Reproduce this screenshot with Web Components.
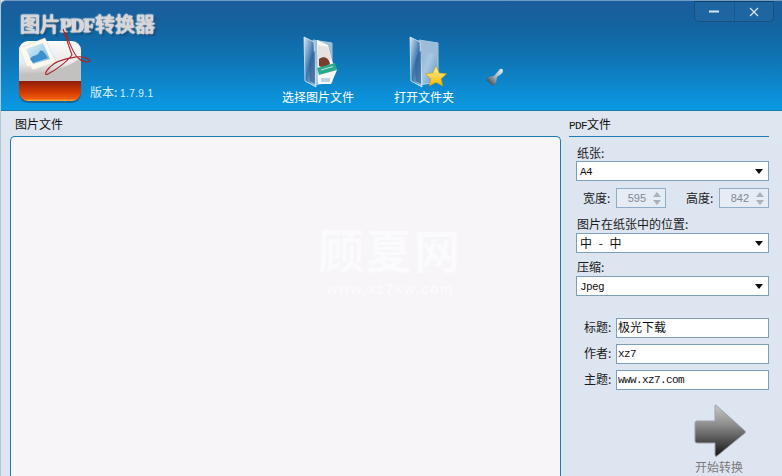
<!DOCTYPE html>
<html lang="zh">
<head>
<meta charset="utf-8">
<title>图片PDF转换器</title>
<style>
  html, body { margin: 0; height: 100%; overflow: hidden; background: #dce5f0; }
  body { font: 12px "Noto Sans CJK SC", sans-serif; color: #1a1a1a; }
</style>
</head>
<body>
<pdf-app></pdf-app>
<script>
const FONT = '"Noto Sans CJK SC", sans-serif';
const MONO = '"Liberation Mono", "Noto Sans CJK SC", monospace';

class AppLogo extends HTMLElement {
  constructor() {
    super();
    this.attachShadow({ mode: 'open' });
    this.shadowRoot.innerHTML = `
      <style>:host { display: block; width: 76px; height: 76px; } svg { display: block; overflow: visible; }</style>
      <svg width="76" height="76" viewBox="18 30 76 76">
        <defs>
          <linearGradient id="top" x1="0" y1="0" x2="0" y2="1">
            <stop offset="0" stop-color="#fbfbfb"/><stop offset=".55" stop-color="#e8e8e8"/><stop offset="1" stop-color="#a9a7a5"/>
          </linearGradient>
          <linearGradient id="red" x1="0" y1="0" x2="0" y2="1">
            <stop offset="0" stop-color="#8f1b04"/><stop offset=".55" stop-color="#d23a04"/><stop offset=".88" stop-color="#ee5a0c"/><stop offset="1" stop-color="#f6ad3c"/>
          </linearGradient>
          <linearGradient id="sky" x1="0" y1="0" x2="1" y2="1">
            <stop offset="0" stop-color="#e2f3fa"/><stop offset="1" stop-color="#6fb6e0"/>
          </linearGradient>
          <clipPath id="round"><rect x="19" y="42" width="62" height="60" rx="9"/></clipPath>
        </defs>
        <rect x="19" y="43" width="62" height="61" rx="9" fill="#1b3f5e" opacity=".55"/>
        <g clip-path="url(#round)">
          <rect x="19" y="42" width="62" height="41" fill="url(#top)"/>
          <path d="M19 76 C40 74 66 72 81 58 V83 H19 Z" fill="#c3c1bf"/>
          <rect x="19" y="82" width="62" height="20" fill="url(#red)"/>
        </g>
        <path d="M19 49 L45 39 L56 63 L33 71 L30 67 L27 68 Z" fill="#fbf8ef" stroke="#d9d4c4" stroke-width=".5"/>
        <path d="M26 50 L43 44 L50 60 L33 65 Z" fill="url(#sky)"/>
        <path d="M30 60 C34 54 37 59 40 52 C43 50 45 55 48 59 L33 64 Z" fill="#3d8fcb"/>
        <path d="M63 30 C66 38 69 48 72 56 C66 64 54 72 48 75 C44 77 45 73 50 68 C56 61 70 59 76 58 C82 57 90 60 90 62 C88 64 82 63 77 58 C72 52 68 40 65 33" fill="none" stroke="#a8262b" stroke-width="1.1"/>
      </svg>`;
  }
}

class FolderIcon extends HTMLElement {
  constructor() {
    super();
    this.attachShadow({ mode: 'open' });
    const kind = this.getAttribute('kind');
    const extra = kind === 'star' ? `
      <path d="M26 29 L29.3 36 L36.6 36.8 L31.2 41.8 L32.7 49 L26 45.3 L19.3 49 L20.8 41.8 L15.4 36.8 L22.7 36 Z" fill="url(#gold)" stroke="#c79a10" stroke-width=".6"/>` : `
      <path d="M13 3 L24 8 L28 24 L33 33 L27 47 L14 47 Z" fill="#f7f7f5"/>
      <path d="M14 8 L24 10 L27 22 L21 27 L14 28 Z" fill="#e6e3df"/>
      <path d="M15 22 C20 18 25 21 26 27 L20 31 L15 29 Z" fill="#7a3f2c"/>
      <path d="M13 31 L31 26 L33 33 L15 38 Z" fill="#2aa98c"/>
      <path d="M17 33 L29 29.5" stroke="#bfe9dd" stroke-width="1"/>
      <rect x="17" y="41" width="9" height="4" fill="#b9d3e3"/>`;
    this.shadowRoot.innerHTML = `
      <style>:host { display: block; width: 34px; height: 51px; } svg { display: block; overflow: visible; }</style>
      <svg width="34" height="51" viewBox="0 0 34 51">
        <defs>
          <linearGradient id="back" x1="0" y1="0" x2="1" y2="1">
            <stop offset="0" stop-color="#7ea9cf"/><stop offset=".5" stop-color="#a9c8e0"/><stop offset="1" stop-color="#5b8dbd"/>
          </linearGradient>
          <linearGradient id="door" x1="0" y1="0" x2="1" y2="1">
            <stop offset="0" stop-color="#d8e8f2"/><stop offset=".5" stop-color="#3c75ad"/><stop offset="1" stop-color="#b3cfe4"/>
          </linearGradient>
          <linearGradient id="gold" x1="0" y1="0" x2="0" y2="1">
            <stop offset="0" stop-color="#fff3a0"/><stop offset="1" stop-color="#f5b800"/>
          </linearGradient>
        </defs>
        <path d="M9 3 L28 6 V45 L9 48 Z" fill="url(#back)" stroke="#c9dff0" stroke-width=".8"/>
        <path d="M9 22 C18 12 27 16 28 24 V6 L9 3 Z" fill="#9dbcd8"/>
        ${extra}
        <path d="M0 0 L10 5 L12 50 L1 44 Z" fill="url(#door)" stroke="#dcecf8" stroke-width=".8"/>
        <path d="M11 14 C5 18 4 30 6 44 L11 47 Z" fill="#2f6299" opacity=".7"/>
      </svg>`;
  }
}

class ToolButton extends HTMLElement {
  constructor() {
    super();
    this.attachShadow({ mode: 'open' });
    this.shadowRoot.innerHTML = `
      <style>
        :host { display: flex; flex-direction: column; align-items: center; color: #fff; font: 12px/16px ${FONT}; }
        .icon { height: 51px; margin: 0 0 1px 6px; }
      </style>
      <div class="icon"><slot name="icon"></slot></div>
      <span><slot></slot></span>`;
  }
}

class WindowControls extends HTMLElement {
  constructor() {
    super();
    this.attachShadow({ mode: 'open' });
    this.shadowRoot.innerHTML = `
      <style>
        :host { display: flex; width: 78px; height: 19px; border: 1px solid #1a4f80; border-top-color: #123f68; border-radius: 0 0 5px 5px; background: #1e66a2; }
        div { flex: 1; display: flex; align-items: center; justify-content: center; }
        div + div { border-left: 1px solid #1a5790; }
        svg { display: block; }
      </style>
      <div title="最小化"><svg width="10" height="3"><rect width="10" height="2" y=".5" fill="#d5e6f3"/></svg></div>
      <div title="关闭"><svg width="10" height="10"><path d="M1 1 L9 9 M9 1 L1 9" stroke="#d5e6f3" stroke-width="1.2"/></svg></div>`;
  }
}

class AppHeader extends HTMLElement {
  constructor() {
    super();
    this.attachShadow({ mode: 'open' });
    this.shadowRoot.innerHTML = `
      <style>
        :host {
          display: flex; box-sizing: border-box; height: 111px; padding-left: 17px;
          background: linear-gradient(#1c5d9c 0, #12649f 25%, #0f76b6 55%, #0a9ae4 100%);
          border-top: 1px solid #6f9dc6; border-bottom: 1px solid #177ca9; border-radius: 5px 0 0 0;
        }
        .brand { width: 264px; flex: none; }
        .title {
          margin-left: 2px; padding-top: 11px; height: 17px; font: 20px/24px ${FONT}; color: #dad8da; white-space: nowrap;
          -webkit-text-stroke: .4px #cfcdcf;
          text-shadow: 0 0 2px #fff, 0 0 2px #fff, 0 0 1px #fff, 2px 2px 2px #12375a;
        }
        .title b { font: bold 19px "Liberation Serif", serif; letter-spacing: -1px; padding-right: 1px; }
        .row { display: flex; align-items: flex-end; }
        .version { margin: 0 0 5px -4px; color: #d9f0fb; font: 12px/16px ${FONT}; white-space: nowrap; }
        .version i { font: normal 10px "Liberation Sans", sans-serif; letter-spacing: .4px; }
        .tools { display: flex; gap: 40px; padding-top: 36px; align-items: flex-start; }
        .lamp { margin: 67px 0 0 32px; }
        .ctl { margin: 0 8px 0 auto; }
      </style>
      <div class="brand">
        <div class="title">图片<b>PDF</b>转换器</div>
        <div class="row">
          <slot name="logo"></slot>
          <div class="version">版本: <i>1.7.9.1</i></div>
        </div>
      </div>
      <div class="tools"><slot name="tools"></slot></div>
      <svg class="lamp" width="18" height="19" viewBox="0 0 18 19">
        <defs><linearGradient id="lamp" x1="1" y1="0" x2="0" y2="1">
          <stop offset="0" stop-color="#eef5f9"/><stop offset=".45" stop-color="#a6b6c2"/><stop offset="1" stop-color="#18222c"/>
        </linearGradient></defs>
        <path d="M14 1 Q17 0 17 3 Q17 5 14 7 L11 9 L10 15 L7 18 L0 12 L2 9 L8 8 Z" fill="url(#lamp)"/>
      </svg>
      <window-controls class="ctl"></window-controls>`;
  }
}

class FilePanel extends HTMLElement {
  constructor() {
    super();
    this.attachShadow({ mode: 'open' });
    this.shadowRoot.innerHTML = `
      <style>
        :host { display: flex; flex-direction: column; position: relative; width: 551px; margin-left: 9px; }
        h2 { margin: 0; height: 25px; padding-left: 5px; font: 12px/25px ${FONT}; color: #111; }
        .box {
          flex: 1; background: #f7f5f8; border: 1px solid #1b7cb2; border-bottom: 0;
          border-radius: 5px 5px 0 0; position: relative;
        }
        .mark { position: absolute; left: 307px; top: 78px; width: 144px; text-align: center; color: #fbfafc; }
        .mark b { display: block; font: bold 46px/66px ${FONT}; letter-spacing: 2px; white-space: nowrap; }
        .mark span { display: block; margin-top: 0; font: bold 14px/16px "Liberation Sans", sans-serif; letter-spacing: 1.4px; white-space: nowrap; }
      </style>
      <h2><slot name="title"></slot></h2>
      <div class="box">
        <div class="mark"><b>顾夏网</b><span>www.xz7xw.com</span></div>
      </div>`;
  }
}

class FormSelect extends HTMLElement {
  constructor() {
    super();
    this.attachShadow({ mode: 'open' });
    const mono = this.hasAttribute('latin');
    this.shadowRoot.innerHTML = `
      <style>
        :host {
          display: flex; align-items: center; box-sizing: border-box; height: 20px; padding: 0 5px 0 3px;
          background: #fff; border: 1px solid #7e9fbc; white-space: pre; color: #111; word-spacing: 4px;
          font: ${mono ? '11px ' + MONO : '12px ' + FONT}; letter-spacing: ${mono ? '-.6px' : '0'};
        }
        span { flex: 1; ${mono ? 'padding-top: 2px;' : 'padding-bottom: 2px;'} }
        i { width: 0; border: 4px solid transparent; border-top: 5px solid #111; border-bottom: 0; }
      </style>
      <span><slot></slot></span><i></i>`;
  }
}

class SpinInput extends HTMLElement {
  constructor() {
    super();
    this.attachShadow({ mode: 'open' });
    this.shadowRoot.innerHTML = `
      <style>
        :host {
          display: flex; box-sizing: border-box; width: 50px; height: 20px; align-items: center; justify-content: flex-end;
          background: #e6ecf3; border: 1px solid #8fadc6; color: #7f8a95; font: 11px "Liberation Sans", sans-serif;
        }
        .arrows { display: flex; flex-direction: column; gap: 3px; width: 13px; margin: 0 2px 0 4px; align-items: center; }
        i { width: 0; border: 4px solid transparent; }
        .up { border-top: 0; border-bottom: 5px solid #a9b2ba; }
        .down { border-bottom: 0; border-top: 5px solid #a9b2ba; }
      </style>
      <slot></slot>
      <div class="arrows"><i class="up"></i><i class="down"></i></div>`;
  }
}

class TextField extends HTMLElement {
  constructor() {
    super();
    this.attachShadow({ mode: 'open' });
    const mono = this.hasAttribute('latin');
    this.shadowRoot.innerHTML = `
      <style>
        :host { display: flex; align-items: center; font: 12px/16px ${FONT}; }
        label { width: 40px; padding: 0 0 2px 8px; box-sizing: border-box; white-space: nowrap; }
        div {
          flex: 1; box-sizing: border-box; height: 20px; padding-left: 1px; background: #fff; border: 1px solid #7e9fbc;
          font: ${mono ? '11px/18px ' + MONO : '12px/16px ' + FONT}; letter-spacing: ${mono ? '-.6px' : '0'}; color: #111;
        }
      </style>
      <label>${this.getAttribute('label')}:</label>
      <div><slot></slot></div>`;
  }
}

class ConvertButton extends HTMLElement {
  constructor() {
    super();
    this.attachShadow({ mode: 'open' });
    this.shadowRoot.innerHTML = `
      <style>
        :host { display: flex; flex-direction: column; align-items: flex-start; color: #7a7a7a; font: 12px/16px ${FONT}; }
        svg { display: block; margin-left: -1px; }
      </style>
      <svg width="54" height="55" viewBox="0 0 54 55">
        <defs>
          <linearGradient id="arrow" x1="0" y1="0" x2="0" y2="1">
            <stop offset="0" stop-color="#c8c8c8"/><stop offset=".4" stop-color="#8a8a8a"/><stop offset="1" stop-color="#141414"/>
          </linearGradient>
        </defs>
        <path d="M1 19 Q1 17 3 17 H21 V2 Q21 0 23 2 L51 27 Q52 28 51 29 L23 52 Q21 53 21 51 V39 H3 Q1 39 1 37 Z" fill="url(#arrow)" stroke="#9aa2aa" stroke-width="1"/>
      </svg>
      <span><slot></slot></span>`;
  }
}

class SidePanel extends HTMLElement {
  constructor() {
    super();
    this.attachShadow({ mode: 'open' });
    this.shadowRoot.innerHTML = `
      <style>
        :host { display: block; box-sizing: border-box; width: 200px; margin-left: 8px; }
        h2 { margin: 0; height: 25px; border-bottom: 1px solid #1b7cb2; font: 12px/25px ${FONT}; color: #111; }
        h2 b { font: 11px ${MONO}; letter-spacing: -.6px; }
        .form { display: block; padding: 8px 0 0 7px; }
      </style>
      <h2><b>PDF</b>文件</h2>
      <div class="form"><slot></slot></div>`;
  }
}

class PdfApp extends HTMLElement {
  constructor() {
    super();
    this.attachShadow({ mode: 'open' });
    this.shadowRoot.innerHTML = `
      <style>
        :host { display: flex; flex-direction: column; height: 476px; overflow: hidden; background: #dce5f0; border-left: 1px solid #b5c6d3; box-sizing: border-box; }
        .main { flex: 1; display: flex; min-height: 0; background: linear-gradient(#dfe6ef, #dce5f0 60px); }
        p { margin: 0; padding-left: 1px; font: 12px/16px ${FONT}; }
        .sizes { display: flex; align-items: center; margin: 7px 0 0; }
        .sizes label { width: 40px; padding-left: 7px; box-sizing: border-box; white-space: nowrap; font: 12px/16px ${FONT}; }
        .sizes label + spin-input + label { width: 53px; padding-left: 20px; }
        .l1 { margin: 8px 0 1px; } .l2 { margin: 6px 0 1px; }
        .fields { display: flex; flex-direction: column; gap: 6px; margin-top: 22px; }
        convert-button { margin: 14px 0 0 119px; }
      </style>
      <app-header>
        <app-logo slot="logo"></app-logo>
        <tool-button slot="tools"><folder-icon slot="icon" kind="pic"></folder-icon>选择图片文件</tool-button>
        <tool-button slot="tools"><folder-icon slot="icon" kind="star"></folder-icon>打开文件夹</tool-button>
      </app-header>
      <div class="main">
        <file-panel><span slot="title">图片文件</span></file-panel>
        <side-panel>
          <p>纸张:</p>
          <form-select latin>A4</form-select>
          <div class="sizes">
            <label>宽度:</label><spin-input>595</spin-input>
            <label>高度:</label><spin-input>842</spin-input>
          </div>
          <p class="l1">图片在纸张中的位置:</p>
          <form-select>中 - 中</form-select>
          <p class="l2">压缩:</p>
          <form-select latin>Jpeg</form-select>
          <div class="fields">
            <text-field label="标题">极光下载</text-field>
            <text-field label="作者" latin>xz7</text-field>
            <text-field label="主题" latin>www.xz7.com</text-field>
          </div>
          <convert-button>开始转换</convert-button>
        </side-panel>
      </div>`;
  }
}

customElements.define('app-logo', AppLogo);
customElements.define('folder-icon', FolderIcon);
customElements.define('tool-button', ToolButton);
customElements.define('window-controls', WindowControls);
customElements.define('app-header', AppHeader);
customElements.define('file-panel', FilePanel);
customElements.define('form-select', FormSelect);
customElements.define('spin-input', SpinInput);
customElements.define('text-field', TextField);
customElements.define('convert-button', ConvertButton);
customElements.define('side-panel', SidePanel);
customElements.define('pdf-app', PdfApp);
</script>
</body>
</html>
